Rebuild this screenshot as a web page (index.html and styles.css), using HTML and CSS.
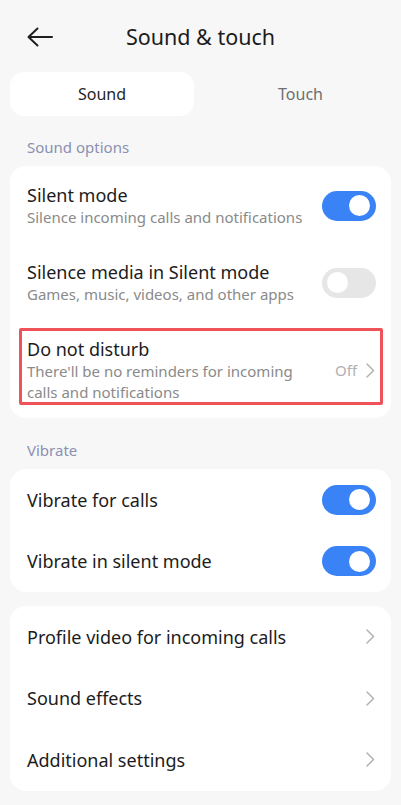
FILE: index.html
```html
<!DOCTYPE html>
<html lang="en">
<head>
    <meta charset="UTF-8">
    <meta name="viewport" content="width=device-width, initial-scale=1.0">
    <title>Sound &amp; touch</title>
    <link rel="stylesheet" href="styles.css">
</head>
<body>
    <header class="topbar">
        <button class="back" aria-label="Back">
            <svg width="26" height="20" viewBox="0 0 26 20">
                <path d="M1.5 10H25M10.5 1.5L1.5 10l9 8.5" fill="none" stroke="#1f1f1f" stroke-width="2" stroke-linecap="round" stroke-linejoin="round"/>
            </svg>
        </button>
        <h1>Sound &amp; touch</h1>
    </header>

    <nav class="tabs">
        <div class="tab active">Sound</div>
        <div class="tab">Touch</div>
    </nav>

    <div class="section-label">Sound options</div>
    <section class="card">
        <div class="row">
            <div class="text">
                <div class="title">Silent mode</div>
                <div class="sub">Silence incoming calls and notifications</div>
            </div>
            <span class="toggle on"></span>
        </div>
        <div class="row">
            <div class="text">
                <div class="title">Silence media in Silent mode</div>
                <div class="sub">Games, music, videos, and other apps</div>
            </div>
            <span class="toggle"></span>
        </div>
        <div class="row marked">
            <div class="text">
                <div class="title">Do not disturb</div>
                <div class="sub">There'll be no reminders for incoming calls and notifications</div>
            </div>
            <span class="value">Off</span>
            <svg class="chevron" width="9" height="15" viewBox="0 0 9 15"><path d="M1 1l6.5 6.5L1 14" fill="none" stroke="#b3b3b3" stroke-width="1.5" stroke-linecap="round" stroke-linejoin="round"/></svg>
            <span class="highlight"></span>
        </div>
    </section>

    <div class="section-label">Vibrate</div>
    <section class="card">
        <div class="row single">
            <div class="title">Vibrate for calls</div>
            <span class="toggle on"></span>
        </div>
        <div class="row single">
            <div class="title">Vibrate in silent mode</div>
            <span class="toggle on"></span>
        </div>
    </section>

    <section class="card spaced">
        <div class="row single">
            <div class="title">Profile video for incoming calls</div>
            <svg class="chevron" width="9" height="15" viewBox="0 0 9 15"><path d="M1 1l6.5 6.5L1 14" fill="none" stroke="#b3b3b3" stroke-width="1.5" stroke-linecap="round" stroke-linejoin="round"/></svg>
        </div>
        <div class="row single">
            <div class="title">Sound effects</div>
            <svg class="chevron" width="9" height="15" viewBox="0 0 9 15"><path d="M1 1l6.5 6.5L1 14" fill="none" stroke="#b3b3b3" stroke-width="1.5" stroke-linecap="round" stroke-linejoin="round"/></svg>
        </div>
        <div class="row single">
            <div class="title">Additional settings</div>
            <svg class="chevron" width="9" height="15" viewBox="0 0 9 15"><path d="M1 1l6.5 6.5L1 14" fill="none" stroke="#b3b3b3" stroke-width="1.5" stroke-linecap="round" stroke-linejoin="round"/></svg>
        </div>
    </section>
</body>
</html>
```

FILE: styles.css
```css
body, html {
    margin: 0;
    padding: 0;
}

body {
    background-color: #f7f7f7;
    font-family: "Noto Sans", "Open Sans", sans-serif;
    color: #1c1c1c;
    padding: 0 10px;
}

.topbar {
    height: 72px;
    display: flex;
    align-items: center;
    position: relative;
}

.back {
    border: none;
    background: none;
    padding: 0;
    margin-left: 17px;
    display: flex;
    margin-top: 1px;
}

.topbar h1 {
    position: absolute;
    left: 0;
    right: 0;
    top: 22px;
    text-align: center;
    margin: 0;
    font-size: 21.5px;
    line-height: 30px;
    font-weight: 400;
    pointer-events: none;
}

.tabs {
    display: grid;
    grid-template-columns: 184px 1fr;
    gap: 16px;
}

.tab {
    height: 44px;
    display: flex;
    align-items: center;
    justify-content: center;
    font-size: 16px;
    color: #6e6e6e;
    border-radius: 14px;
}

.tab.active {
    background: white;
    color: #1f1f1f;
}

.section-label {
    padding: 21px 17px 9px;
    line-height: 20px;
    font-size: 15px;
    color: #8a90b3;
}

.card + .section-label {
    padding-top: 22px;
}

.card {
    background: white;
    border-radius: 16px;
}

.card.spaced {
    margin-top: 14px;
}

.row {
    display: flex;
    align-items: center;
    padding: 17px 15px 15px 17px;
    position: relative;
}

.row.single {
    padding-top: 0;
    padding-bottom: 0;
    height: 61.5px;
}

.text {
    flex: 1;
}

.title {
    flex: 1;
    font-size: 18px;
    line-height: 24px;
}

.sub {
    font-size: 15px;
    line-height: 21px;
    color: #8a8a8a;
}

.marked .text {
    padding-right: 30px;
}

.value {
    font-size: 15px;
    color: #b0b0b0;
    margin-right: 9px;
}

.chevron {
    flex: none;
    margin-right: 1px;
}

.toggle {
    flex: none;
    width: 54px;
    height: 30px;
    border-radius: 15px;
    background: #e6e6e6;
    position: relative;
}

.toggle::after {
    content: "";
    position: absolute;
    top: 4.5px;
    left: 5px;
    width: 21px;
    height: 21px;
    border-radius: 50%;
    background: white;
}

.toggle.on {
    background: #3a83f6;
}

.toggle.on::after {
    left: auto;
    right: 6px;
}

/* red marker drawn over the Do not disturb row */
.highlight {
    position: absolute;
    left: 9px;
    right: 8px;
    top: 8px;
    bottom: 13px;
    border: 3px solid #ef5258;
    border-radius: 2px;
    pointer-events: none;
}
```
